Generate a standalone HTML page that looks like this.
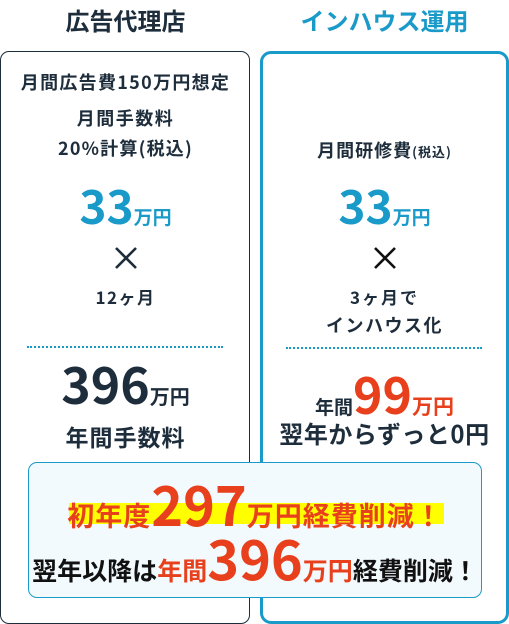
<!DOCTYPE html>
<html><head><meta charset="utf-8"><style>
*{margin:0;padding:0;box-sizing:border-box}
body{width:509px;height:624px;background:#fff;position:relative;overflow:hidden;font-family:"Noto Sans CJK JP","Liberation Sans",sans-serif;font-weight:bold;color:#1e2d3b}
.b{position:absolute}
.l{position:absolute;text-align:center;white-space:nowrap}
.L{left:0;width:251px}.R{left:260px;width:249px}
.blue{color:#1a9ac9}.red{color:#e8401c}
.dot{position:absolute;height:0;border-top:2px dotted #1a9ac9}
</style></head><body>
<div class="l L" style="top:5px;line-height:30px;font-size:24px">広告代理店</div>
<div class="l R blue" style="top:5px;line-height:30px;font-size:24px">インハウス運用</div>
<div class="b" style="left:0;top:51px;width:250px;height:573px;border:1px solid #1e2d3b;border-radius:9px"></div>
<div class="b" style="left:260px;top:51px;width:249px;height:573px;border:3px solid #1a9ac9;border-radius:11px"></div>

<div class="l L" style="top:70px;line-height:24px;font-size:18px;letter-spacing:1.3px">月間広告費150万円想定</div>
<div class="l L" style="top:106px;line-height:24px;font-size:18px;letter-spacing:1.5px">月間手数料</div>
<div class="l L" style="top:136px;line-height:24px;font-size:18px;letter-spacing:1.2px">20%計算(税込)</div>
<div class="l L blue" style="top:179px;line-height:52px;font-size:46px">33<span style="font-size:19px">万円</span></div>
<svg class="b" style="left:114px;top:246px" width="24" height="24"><path d="M2 2L22 22M22 2L2 22" stroke="#1e2d3b" stroke-width="2.6"/></svg>
<div class="l L" style="top:285px;line-height:24px;font-size:17px;letter-spacing:1.5px">12ヶ月</div>
<div class="dot" style="left:27px;width:196px;top:346px"></div>
<div class="l L" style="top:355px;line-height:56px;font-size:50px">396<span style="font-size:20px">万円</span></div>
<div class="l L" style="top:421px;line-height:30px;font-size:23px;letter-spacing:1px">年間手数料</div>

<div class="l R" style="top:138px;line-height:24px;font-size:18px;letter-spacing:1px">月間研修費<span style="font-size:13px">(税込)</span></div>
<div class="l R blue" style="top:179px;line-height:52px;font-size:46px">33<span style="font-size:19px">万円</span></div>
<svg class="b" style="left:373px;top:246px" width="24" height="24"><path d="M2 2L22 22M22 2L2 22" stroke="#111" stroke-width="2.6"/></svg>
<div class="l R" style="top:285px;line-height:24px;font-size:17px;letter-spacing:2px">3ヶ月で</div>
<div class="l R" style="top:313px;line-height:24px;font-size:18px;letter-spacing:1.5px">インハウス化</div>
<div class="dot" style="left:286px;width:196px;top:347px"></div>
<div class="l R" style="top:365px;line-height:56px;font-size:19px"><span>年間</span><span class="red" style="font-size:50px">99</span><span class="red" style="font-size:21px">万円</span></div>
<div class="l R" style="top:418px;line-height:30px;font-size:24px;letter-spacing:0.5px">翌年からずっと0円</div>

<div class="b" style="left:28px;top:462px;width:454px;height:136px;background:#f3fafe;border:1px solid #1a9ac9;border-radius:9px"></div>
<div class="b" style="left:69px;top:503px;width:375px;height:21px;background:#ffff00"></div>
<div class="l red" style="left:28px;width:454px;top:474px;line-height:58px;font-size:27px;letter-spacing:1px">初年度<span style="font-size:54px;letter-spacing:0">297</span>万円経費削減！</div>
<div class="l" style="left:28px;width:454px;top:528px;line-height:58px;font-size:25px;color:#111">翌年以降は<span class="red">年間<span style="font-size:54px">396</span>万円</span>経費削減！</div>
</body></html>
